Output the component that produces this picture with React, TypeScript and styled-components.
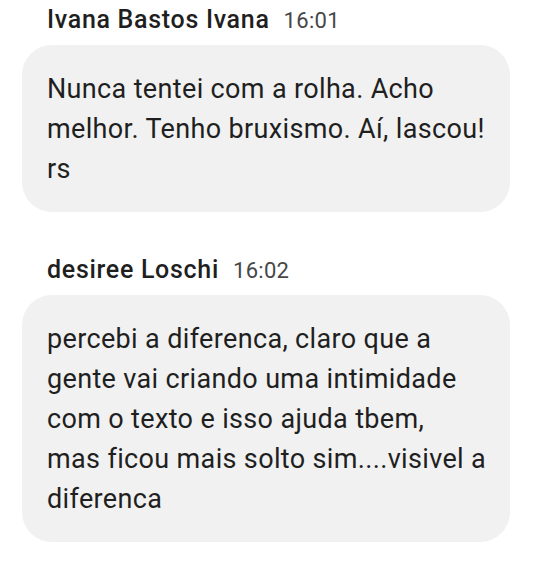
import React from "react";
import styled, { createGlobalStyle } from "styled-components";

const Global = createGlobalStyle`
  html, body { margin: 0; padding: 0; background: #ffffff; }
  body { font-family: Roboto, "Noto Sans", Arial, sans-serif; -webkit-font-smoothing: antialiased; }
`;

const Thread = styled.div`
  display: flex;
  flex-direction: column;
  gap: 42px;
  padding: 4px 28px 0 22px;
  width: 488px;
`;

const Message = styled.div`
  display: flex;
  flex-direction: column;
  gap: 9px;
`;

const Header = styled.div`
  display: flex;
  align-items: baseline;
  gap: 14px;
  padding-left: 25px;
  height: 32px;
  line-height: 32px;
`;

const Name = styled.span`
  font-size: 25px;
  font-weight: 500;
  letter-spacing: 0.7px;
  color: #1f1f1f;
`;

const Time = styled.span`
  font-size: 22px;
  font-weight: 400;
  letter-spacing: 0.3px;
  color: #474747;
`;

const Bubble = styled.div`
  background: #f1f1f1;
  border-radius: 30px;
  padding: 24px 23px 23px 25px;
  font-size: 27px;
  letter-spacing: 0.35px;
  line-height: 40px;
  color: #1f1f1f;
`;

const Line = styled.span`
  display: block;
  white-space: nowrap;
`;

const messages = [
  {
    name: "Ivana Bastos Ivana",
    time: "16:01",
    lines: ["Nunca tentei com a rolha. Acho", "melhor. Tenho bruxismo. Aí, lascou!", "rs"],
  },
  {
    name: "desiree Loschi",
    time: "16:02",
    lines: [
      "percebi a diferenca, claro que a",
      "gente vai criando uma intimidade",
      "com o texto e isso ajuda tbem,",
      "mas ficou mais solto sim....visivel a",
      "diferenca",
    ],
  },
];

export default function App() {
  return (
    <>
      <Global />
      <Thread>
        {messages.map((m) => (
          <Message key={m.time}>
            <Header>
              <Name>{m.name}</Name>
              <Time>{m.time}</Time>
            </Header>
            <Bubble>
              {m.lines.map((l, i) => (
                <Line key={i}>{l}</Line>
              ))}
            </Bubble>
          </Message>
        ))}
      </Thread>
    </>
  );
}
